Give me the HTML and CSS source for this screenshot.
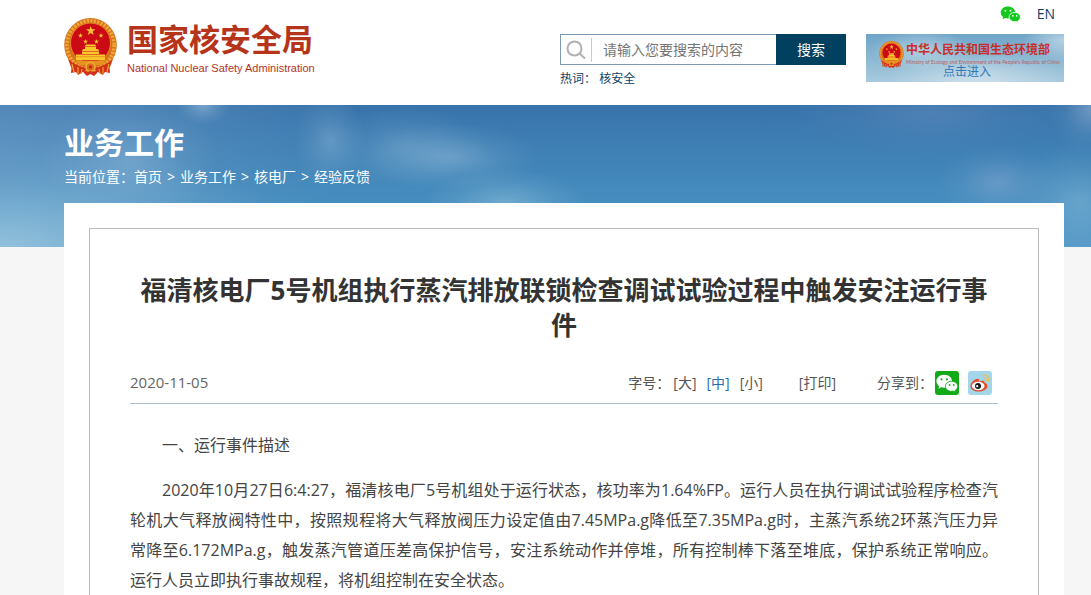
FILE: index.html
```html
<!DOCTYPE html>
<html lang="zh-CN">
<head>
    <meta charset="UTF-8">
    <meta name="viewport" content="width=device-width, initial-scale=1.0">
    <title>国家核安全局</title>
    <link rel="stylesheet" href="styles.css">
</head>
<body>
    <!-- shared icons -->
    <svg class="sprite" aria-hidden="true">
        <symbol id="star" viewBox="0 0 20 20">
            <path d="M10 0l2.4 7.1H20l-6.1 4.5 2.3 7.4L10 14.5 3.800 19l2.300-7.400L0 7.100h7.600z"/>
        </symbol>
        <symbol id="emblem" viewBox="0 0 53 58">
            <path d="M8 43l-1 12 5-1 2 3 5-3 4 3 3.500-2 3.500 2 4-3 5 3 2-3 5 1-1-12z" fill="#d2311a"/>
            <ellipse cx="26.500" cy="27" rx="26.300" ry="27" fill="#d8701b"/>
            <ellipse cx="26.500" cy="27" rx="23.600" ry="24.300" fill="none" stroke="#eda83a" stroke-width="3.600" stroke-dasharray="2.200 1.300"/>
            <circle cx="26.500" cy="25" r="20" fill="#cc0a16" stroke="#e58a1e" stroke-width="1"/>
            <g fill="#f9c62c">
                <use href="#star" x="22" y="8" width="9.500" height="9.500"/>
                <use href="#star" x="14" y="15" width="5" height="5"/>
                <use href="#star" x="34.500" y="15" width="5" height="5"/>
                <use href="#star" x="19" y="21" width="5" height="5"/>
                <use href="#star" x="30" y="21" width="5" height="5"/>
                <path d="M20.500 28.500l1.500-2h9l1.500 2zM21 29h11v2H21zM19 31h15l1 2H18zM18 33.500h17V36H18zM12 36.500h29V42H12z"/>
            </g>
            <path d="M12 38.700h29" stroke="#e08a1a" stroke-width=".8"/>
            <path d="M11 42.500h31L37 47H16z" fill="#e8921f"/>
            <path d="M4 41c6 5 12 8 19 9l-3 4-7-1-6-4zM49 41c-6 5-12 8-19 9l3 4 7-1 6-4z" fill="#d2311a"/>
            <path d="M8 46l2 8M14 49v7M18 51l-1 5M45 46l-2 8M39 49v7M35 51l1 5" stroke="#efa52c" stroke-width="1.200" fill="none"/>
            <circle cx="26.500" cy="49" r="4.500" fill="#d8701b" stroke="#f0ae36" stroke-width="1.500"/>
            <circle cx="26.500" cy="49" r="1.500" fill="#c81e14"/>
            <path d="M20 55l6.500-2 6.500 2-3 3-3.500-2-3.500 2z" fill="#d2311a"/>
        </symbol>
        <symbol id="wechat" viewBox="0 0 24 20">
            <path d="M9 .5C4 .5.500 3.700.500 7.600c0 2.300 1.200 4.200 3 5.400l-.9 2.700 3.200-1.500c1 .3 2 .4 3.200.4 5 0 8.500-3 8.500-7S14 .5 9 .5z"/>
            <path class="front" d="M23.700 13c0-3.200-3-5.500-6.700-5.500s-6.700 2.300-6.700 5.500 3 5.500 6.700 5.500c.8 0 1.600-.1 2.300-.3l2.400 1.300-.6-2.200c1.600-1 2.600-2.500 2.600-4.300z"/>
            <g class="eyes">
                <circle cx="6" cy="5.500" r="1.100"/><circle cx="12" cy="5.500" r="1.100"/>
                <circle cx="14.800" cy="11.500" r="1"/><circle cx="19.300" cy="11.500" r="1"/>
            </g>
        </symbol>
    </svg>

    <header class="container header">
        <a href="#" class="logo">
            <svg class="logo-emblem" aria-hidden="true"><use href="#emblem"/></svg>
            <span class="logo-text">
                <span class="logo-cn">国家核安全局</span>
                <span class="logo-en">National Nuclear Safety Administration</span>
            </span>
        </a>
        <div class="header-right">
            <div class="search">
                <form class="search-form" action="#">
                    <label class="search-label" for="keyword" aria-label="搜索">
                        <svg width="20" height="20" viewBox="0 0 20 20" fill="none" stroke="#b0b0b0" stroke-width="2">
                            <circle cx="8.500" cy="8.500" r="7"/>
                            <path d="M13.500 13.500l5.500 5"/>
                        </svg>
                    </label>
                    <input class="search-input" type="text" id="keyword" name="keyword" placeholder="请输入您要搜索的内容">
                    <button class="search-button" type="submit">搜索</button>
                </form>
                <p class="hot">热词： <a href="#">核安全</a></p>
            </div>
            <div class="side">
                <div class="side-links">
                    <a href="#" aria-label="微信"><svg class="icon-wechat"><use href="#wechat"/></svg></a>
                    <a href="#">EN</a>
                </div>
                <a href="#" class="ministry">
                    <svg class="ministry-emblem" aria-hidden="true"><use href="#emblem"/></svg>
                    <span class="ministry-text">
                        <span class="ministry-cn">中华人民共和国生态环境部</span>
                        <span class="ministry-en">Ministry of Ecology and Environment of the People's Republic of China</span>
                        <span class="ministry-enter">点击进入</span>
                    </span>
                </a>
            </div>
        </div>
    </header>

    <div class="banner">
        <div class="container">
            <h2 class="banner-title">业务工作</h2>
            <nav class="crumbs">
                <span>当前位置：<a href="#">首页</a></span>
                <span>&gt;</span>
                <a href="#">业务工作</a>
                <span>&gt;</span>
                <a href="#">核电厂</a>
                <span>&gt;</span>
                <a href="#">经验反馈</a>
            </nav>
        </div>
    </div>

    <main class="container">
        <div class="panel">
            <article class="article">
                <h1 class="article-title">福清核电厂5号机组执行蒸汽排放联锁检查调试试验过程中触发安注运行事件</h1>
                <div class="meta">
                    <time class="date" datetime="2020-11-05">2020-11-05</time>
                    <div class="tools">
                        <div class="sizes">
                            <span>字号：</span>
                            <a href="#">[大]</a>
                            <a href="#" class="active">[中]</a>
                            <a href="#">[小]</a>
                        </div>
                        <a href="#">[打印]</a>
                        <div class="share">
                            <span>分享到：</span>
                            <a href="#" class="share-wechat" aria-label="微信"><svg width="22" height="19"><use href="#wechat"/></svg></a>
                            <a href="#" class="share-weibo" aria-label="微博">
                                <svg width="24" height="24" viewBox="0 0 24 24">
                                    <path d="M15.500 4.500c3.500-.8 6 2 5 5.500M15.800 7.300c1.600-.3 2.700.8 2.200 2.400" fill="none" stroke="#e8c15a" stroke-width="1.500" stroke-linecap="round"/>
                                    <path d="M2.500 14.500C3 11 8 7 10.500 8c1 .4.9 1.500.6 2.400 2.500-1 5.800-1.200 5.500 1.300 2.200.6 3.200 2 2.800 3.800-.7 3.200-4.600 5-8.900 5s-8.500-2-8-6z" fill="#e2502f"/>
                                    <ellipse cx="10.200" cy="15" rx="6.300" ry="4.200" fill="#fff"/>
                                    <circle cx="10" cy="15" r="3" fill="#1a1a1a"/>
                                    <circle cx="9.200" cy="15.200" r="1.100" fill="#fff"/>
                                </svg>
                            </a>
                        </div>
                    </div>
                </div>
                <div class="content">
                    <p>一、运行事件描述</p>
                    <p>2020年10月27日6:4:27，福清核电厂5号机组处于运行状态，核功率为1.64%FP。运行人员在执行调试试验程序检查汽轮机大气释放阀特性中，按照规程将大气释放阀压力设定值由7.45MPa.g降低至7.35MPa.g时，主蒸汽系统2环蒸汽压力异常降至6.172MPa.g，触发蒸汽管道压差高保护信号，安注系统动作并停堆，所有控制棒下落至堆底，保护系统正常响应。运行人员立即执行事故规程，将机组控制在安全状态。</p>
                </div>
            </article>
        </div>
    </main>
</body>
</html>
```
FILE: styles.css
```css
* {
    box-sizing: border-box;
}
html {
    background: #f6f6f6;
}
body {
    margin: 0;
    font-family: "Open Sans", "Noto Sans CJK SC", sans-serif;
    font-size: 14px;
    line-height: 20px;
    color: #555;
    background: linear-gradient(#fff 105px, #f6f6f6 105px);
}
a {
    color: inherit;
    text-decoration: none;
}
h1, h2, p {
    margin: 0;
}
svg {
    display: block;
}
.sprite {
    position: absolute;
    width: 0;
    height: 0;
}
.front {
    stroke: var(--icon-bg);
    stroke-width: 1;
}
.eyes {
    fill: var(--icon-bg);
}
.container {
    margin: 0 27px 0 64px;
}

/* header */
.header {
    display: flex;
    justify-content: space-between;
    height: 105px;
}
.logo {
    display: flex;
    gap: 10px;
    padding-top: 18px;
    color: #b5341a;
}
.logo-emblem {
    width: 53px;
    height: 58px;
}
.logo-text {
    display: flex;
    flex-direction: column;
}
.logo-cn {
    font-size: 31px;
    line-height: 42px;
    font-weight: bold;
}
.logo-en {
    font-family: "Liberation Sans", Arial, sans-serif;
    font-size: 11px;
    line-height: 16px;
}
.header-right {
    display: flex;
    gap: 20px;
}
.search {
    width: 286px;
    padding-top: 34px;
    color: #0e4266;
}
.search-form {
    display: flex;
    height: 31px;
}
.search-label {
    display: flex;
    align-items: center;
    padding-left: 5px;
    width: 31px;
    border: 1px solid #7a9bb8;
    border-right: 0;
}
.search-input {
    flex: 1;
    min-width: 0;
    padding: 0 0 0 12px;
    border: 1px solid #7a9bb8;
    border-width: 1px 0;
    background: linear-gradient(#c8c8c8, #c8c8c8) 0 center / 1px 24px no-repeat #fff;
    font: inherit;
    color: #555;
    outline: none;
}
.search-input::placeholder {
    color: #757575;
}
.search-button {
    width: 70px;
    padding: 0;
    border: 0;
    background: #02405f;
    color: #fff;
    font: inherit;
    cursor: pointer;
}
.hot {
    padding-top: 4px;
    font-size: 12px;
}
.side {
    width: 198px;
}
.side-links {
    display: flex;
    justify-content: flex-end;
    align-items: center;
    gap: 16px;
    height: 34px;
    padding: 0 9px 6px 0;
    color: #0e4266;
}
.icon-wechat {
    --icon-bg: #fff;
    width: 21px;
    height: 17px;
    fill: #14c81c;
}
.ministry {
    display: flex;
    gap: 2px;
    height: 48px;
    padding: 7px 0 0 13px;
    color: #c62f2a;
    background:
        radial-gradient(ellipse 50px 20px at 55px 16px, rgba(220, 232, 240, .5), transparent),
        radial-gradient(ellipse 90px 28px at 110px 46px, rgba(225, 236, 243, .6), transparent),
        radial-gradient(ellipse 40px 20px at 198px 6px, rgba(225, 236, 243, .6), transparent),
        linear-gradient(#6fa5c8, #a8cade);
}
.ministry-emblem {
    width: 25px;
    height: 27px;
}
.ministry-text {
    display: flex;
    flex-direction: column;
    white-space: nowrap;
}
.ministry-cn {
    font-size: 12px;
    line-height: 18px;
    font-weight: bold;
}
.ministry-en {
    font-family: Lato, sans-serif;
    font-size: 5px;
    line-height: 6px;
    color: #b8605f;
}
.ministry-enter {
    padding-left: 37px;
    font-size: 12px;
    line-height: 14px;
    color: #2f78b5;
}

/* banner */
.banner {
    height: 142px;
    padding-top: 18px;
    color: #fff;
    background:
        radial-gradient(ellipse 28px 20px at 203px 0, rgba(170, 200, 225, .5), rgba(170, 200, 225, .15) 60%, transparent),
        radial-gradient(ellipse 90px 60px at 130px 55px, rgba(150, 190, 220, .4), rgba(150, 190, 220, .12) 60%, transparent),
        radial-gradient(ellipse 36px 48px at 330px 36px, rgba(160, 195, 220, .35), rgba(160, 195, 220, .12) 55%, transparent),
        radial-gradient(ellipse 80px 40px at 405px 42px, rgba(150, 190, 218, .3), rgba(150, 190, 218, .1) 60%, transparent),
        radial-gradient(ellipse 90px 34px at 450px 52px, rgba(150, 190, 218, .45), rgba(150, 190, 218, .12) 60%, transparent),
        radial-gradient(ellipse 80px 34px at 505px 98px, rgba(150, 195, 220, .5), rgba(150, 195, 220, .15) 60%, transparent),
        radial-gradient(ellipse 140px 40px at 930px 8px, rgba(115, 150, 195, .35), rgba(115, 150, 195, .1) 60%, transparent),
        radial-gradient(ellipse 60px 38px at 998px 78px, rgba(135, 170, 210, .5), rgba(135, 170, 210, .12) 60%, transparent),
        radial-gradient(ellipse 70px 60px at 1080px 98px, rgba(135, 185, 215, .5), rgba(135, 185, 215, .15) 60%, transparent),
        radial-gradient(ellipse 44px 44px at 1091px 4px, rgba(160, 185, 215, .5), rgba(160, 185, 215, .1) 60%, transparent),
        radial-gradient(ellipse 300px 110px at 0 142px, rgba(165, 205, 226, .75), rgba(165, 205, 226, .2) 60%, transparent),
        radial-gradient(ellipse 360px 150px at 0 30px, rgba(120, 165, 205, .5), rgba(120, 165, 205, .2) 60%, transparent),
        linear-gradient(#3873ab, #478fc0 70%, #5599c8);
}
.banner-title {
    font-size: 30px;
    line-height: 40px;
}
.crumbs {
    display: flex;
    gap: 5px;
    padding-top: 4px;
}

/* article */
.panel {
    margin-top: -44px;
    padding: 25px 25px 0;
    background: #fff;
}
.article {
    padding: 44px 40px 0;
    border: 1px solid #bbb;
    border-bottom: 0;
}
.article-title {
    font-size: 26px;
    line-height: 35px;
    text-align: center;
    color: #333;
}
.meta {
    display: flex;
    justify-content: space-between;
    align-items: center;
    height: 61px;
    padding-top: 20px;
    border-bottom: 1px solid #a9bfce;
}
.date {
    padding-bottom: 3px;
    font-size: 15px;
    color: #666;
}
.tools {
    display: flex;
    align-items: center;
    gap: 36px;
    padding-right: 6px;
}
.sizes {
    display: flex;
    gap: 10px;
}
.sizes span {
    margin-right: -7px;
}
.sizes .active {
    color: #2a6eae;
}
.share {
    display: flex;
    align-items: center;
    gap: 9px;
    padding-left: 5px;
}
.share span {
    margin-right: -7px;
}
.share-wechat,
.share-weibo {
    display: flex;
    align-items: center;
    justify-content: center;
    width: 24px;
    height: 24px;
    border-radius: 3px;
}
.share-wechat {
    --icon-bg: #12aa18;
    background: #12aa18;
    fill: #fff;
}
.share-weibo {
    background: #a3d6e8;
}
.content {
    padding-top: 26px;
    font-size: 16px;
    line-height: 30px;
    color: #444;
}
.content p {
    margin-bottom: 15px;
    text-indent: 2em;
    text-align: justify;
}
.content p:last-child {
    margin-bottom: 0;
}
```
